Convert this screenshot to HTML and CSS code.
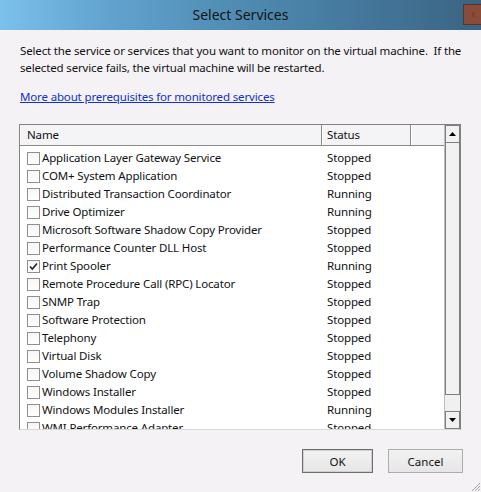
FILE: index.html
```html
<!DOCTYPE html>
<html>
<head>
<meta charset="utf-8">
<link rel="stylesheet" href="styles.css">
</head>
<body>
<div class="dialog">
  <div class="titlebar">
    <span class="title">Select Services</span>
    <span class="close">x</span>
  </div>
  <div class="content">
    <p class="desc">Select the service or services that you want to monitor on the virtual machine.&nbsp; If the selected service fails, the virtual machine will be restarted.</p>
    <a class="link" href="#">More about prerequisites for monitored services</a>
    <div class="listview">
      <div class="listmain">
        <div class="header">
          <div class="hcell hname">Name</div>
          <div class="hcell hstatus">Status</div>
          <div class="hcell hblank"></div>
        </div>
        <div class="rows">
          <div class="row"><span class="cname"><span class="cb"></span>Application Layer Gateway Service</span><span class="cstatus">Stopped</span></div>
          <div class="row"><span class="cname"><span class="cb"></span>COM+ System Application</span><span class="cstatus">Stopped</span></div>
          <div class="row"><span class="cname"><span class="cb"></span>Distributed Transaction Coordinator</span><span class="cstatus">Running</span></div>
          <div class="row"><span class="cname"><span class="cb"></span>Drive Optimizer</span><span class="cstatus">Running</span></div>
          <div class="row"><span class="cname"><span class="cb"></span>Microsoft Software Shadow Copy Provider</span><span class="cstatus">Stopped</span></div>
          <div class="row"><span class="cname"><span class="cb"></span>Performance Counter DLL Host</span><span class="cstatus">Stopped</span></div>
          <div class="row"><span class="cname"><span class="cb checked"><svg width="11" height="11" viewBox="0 0 11 11"><path d="M2 5.5 L4.3 8 L9 2.5" fill="none" stroke="#222" stroke-width="1.6"/></svg></span>Print Spooler</span><span class="cstatus">Running</span></div>
          <div class="row"><span class="cname"><span class="cb"></span>Remote Procedure Call (RPC) Locator</span><span class="cstatus">Stopped</span></div>
          <div class="row"><span class="cname"><span class="cb"></span>SNMP Trap</span><span class="cstatus">Stopped</span></div>
          <div class="row"><span class="cname"><span class="cb"></span>Software Protection</span><span class="cstatus">Stopped</span></div>
          <div class="row"><span class="cname"><span class="cb"></span>Telephony</span><span class="cstatus">Stopped</span></div>
          <div class="row"><span class="cname"><span class="cb"></span>Virtual Disk</span><span class="cstatus">Stopped</span></div>
          <div class="row"><span class="cname"><span class="cb"></span>Volume Shadow Copy</span><span class="cstatus">Stopped</span></div>
          <div class="row"><span class="cname"><span class="cb"></span>Windows Installer</span><span class="cstatus">Stopped</span></div>
          <div class="row"><span class="cname"><span class="cb"></span>Windows Modules Installer</span><span class="cstatus">Running</span></div>
          <div class="row"><span class="cname"><span class="cb"></span>WMI Performance Adapter</span><span class="cstatus">Stopped</span></div>
        </div>
      </div>
      <div class="scrollbar">
        <div class="sbtn"><svg width="7" height="4" viewBox="0 0 7 4"><path d="M0 4 L3.5 0 L7 4 Z" fill="#000"/></svg></div>
        <div class="thumb"></div>
        <div class="track"></div>
        <div class="sbtn"><svg width="7" height="4" viewBox="0 0 7 4"><path d="M0 0 L7 0 L3.5 4 Z" fill="#000"/></svg></div>
      </div>
    </div>
    <div class="buttons">
      <button class="btn ok">OK</button>
      <button class="btn cancel">Cancel</button>
    </div>
  </div>
  <div class="grip">
    <svg width="12" height="12" viewBox="0 0 12 12"><path d="M11 3 L3 11 M11 6 L6 11 M11 9 L9 11" stroke="#a8a8a8" stroke-width="1"/></svg>
  </div>
</div>
</body>
</html>
```
FILE: styles.css
```css
* { box-sizing: border-box; }
html, body { margin: 0; padding: 0; }
body {
  width: 481px;
  height: 492px;
  overflow: hidden;
  font-family: "Noto Sans", "Open Sans", sans-serif;
  font-size: 11.5px;
  letter-spacing: -0.15px;
  color: #111;
  background: #f4f2f5;
}
.dialog {
  position: relative;
  width: 481px;
  height: 492px;
  background: #f4f2f5;
}
.titlebar {
  position: relative;
  height: 30px;
  display: flex;
  align-items: center;
  justify-content: center;
  background: linear-gradient(to right, #7cc0ec 0%, #62a3cf 22%, #4f8bb2 50%, #44779b 75%, #3b6483 100%);
}
.title {
  font-size: 14px;
  letter-spacing: 0;
  color: #141414;
  margin-top: -1px;
}
.close {
  position: absolute;
  right: -2px;
  top: 4px;
  width: 20px;
  height: 21px;
  background: #8a4b39;
  border: 1px solid #5a3428;
  color: #6a3a2c;
  font-size: 8px;
  line-height: 18px;
  text-align: center;
}
.content {
  padding: 12px 0 0 20px;
  display: flex;
  flex-direction: column;
  align-items: flex-start;
}
.desc {
  margin: 0;
  width: 445px;
  line-height: 17px;
}
.link {
  margin-top: 12px;
  line-height: 17px;
  color: #1030c8;
  text-decoration: underline;
}
.listview {
  margin-top: 19px;
  margin-left: -1px;
  width: 442px;
  height: 306px;
  border: 1px solid #828282;
  border-bottom-color: #d8d8d8;
  background: #fff;
  display: grid;
  grid-template-columns: 424px 16px;
  overflow: hidden;
}
.listmain {
  display: flex;
  flex-direction: column;
  overflow: hidden;
}
.header {
  display: flex;
  height: 21px;
  background: #f4f3f5;
  border-bottom: 1px solid #8a8a8a;
  flex: none;
}
.hcell {
  height: 20px;
  line-height: 20px;
  border-right: 1px solid #8a8a8a;
  box-shadow: inset 1px 0 0 #fff;
}
.hname { width: 302px; padding-left: 7px; }
.hstatus { width: 89px; padding-left: 5px; }
.hblank { width: 33px; border-right: none; }
.rows {
  padding-top: 3px;
  overflow: hidden;
}
.row {
  display: flex;
  height: 18px;
  align-items: center;
  line-height: 18px;
  white-space: nowrap;
}
.cname {
  width: 301px;
  padding-left: 7px;
  display: flex;
  align-items: center;
}
.cstatus {
  padding-left: 6px;
}
.cb {
  width: 13px;
  height: 13px;
  border: 1px solid #8e8f8f;
  background: linear-gradient(#f6f6f6, #fff);
  margin-right: 2px;
  flex: none;
  display: flex;
  align-items: center;
  justify-content: center;
}
.scrollbar {
  display: flex;
  flex-direction: column;
  background: #f0f0f0;
  border-left: 1px solid #bdbdbd;
}
.sbtn {
  height: 18px;
  border: 1px solid #7e7e7e;
  background: #f2f2f2;
  display: flex;
  align-items: center;
  justify-content: center;
  flex: none;
}
.thumb {
  height: 252px;
  border: 1px solid #7e7e7e;
  border-top: none;
  background: #f2f2f2;
  flex: none;
}
.track { flex: 1; }
.buttons {
  margin-top: 19px;
  align-self: flex-end;
  margin-right: 18px;
  display: flex;
  gap: 15px;
}
.btn {
  height: 24px;
  font-family: "Noto Sans", "Open Sans", sans-serif;
  font-size: 11.5px;
  color: #111;
  background: linear-gradient(#f2f2f2, #e6e6e6);
  border: 1px solid #acacac;
  padding: 0;
}
.ok { width: 71px; border-color: #6e6e6e; box-shadow: inset 0 0 0 1px #cfcfcf; }
.cancel { width: 75px; }
.grip {
  position: absolute;
  right: 0;
  bottom: 0;
  width: 12px;
  height: 12px;
  line-height: 0;
}
```
